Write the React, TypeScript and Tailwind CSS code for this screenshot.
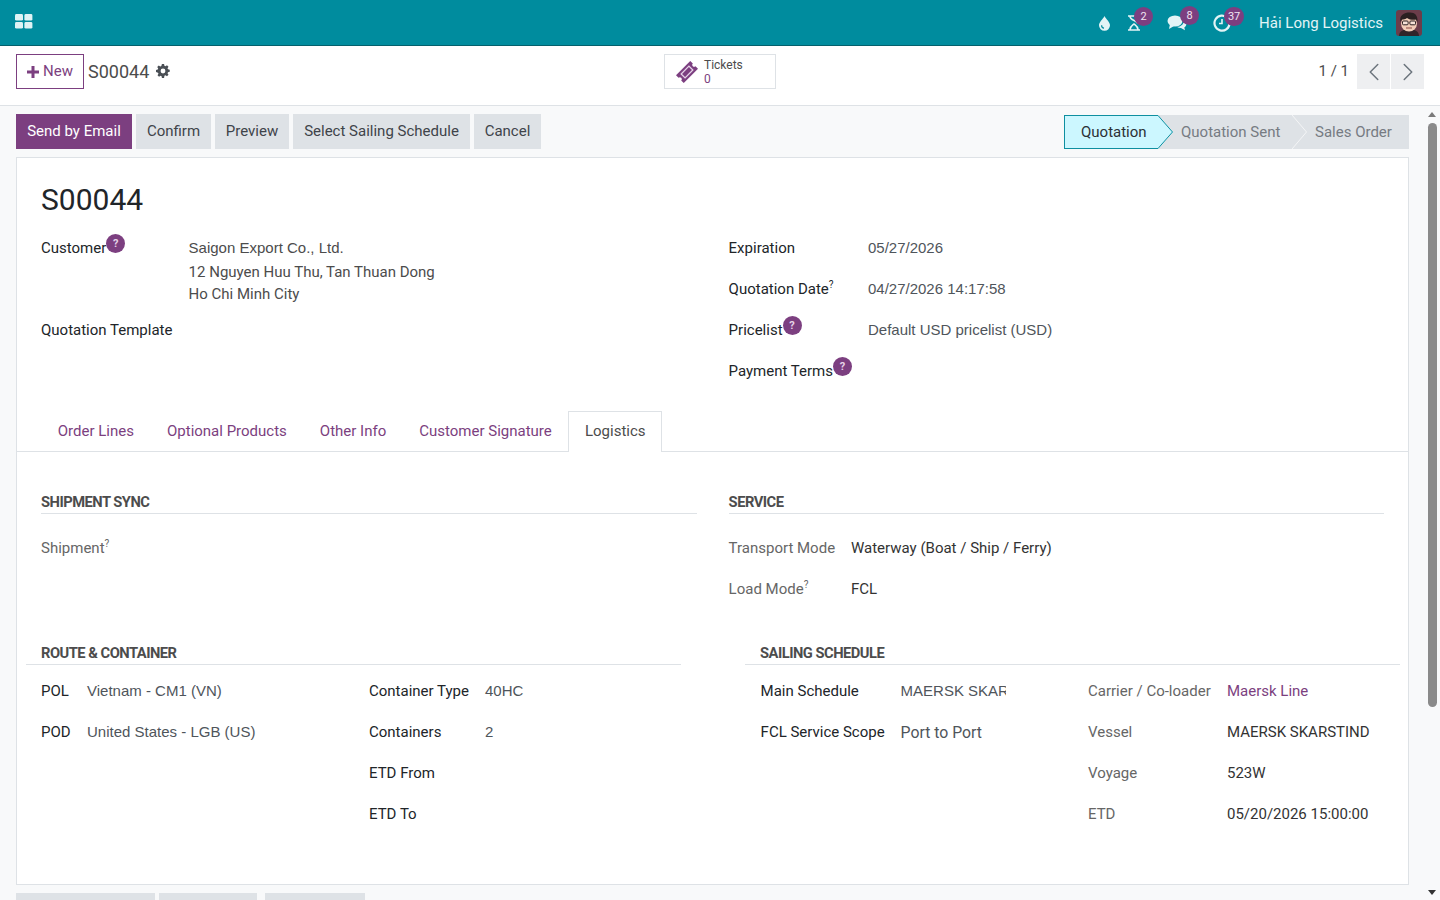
import { ChevronLeft, ChevronRight } from "lucide-react";

const PURPLE = "#7c3f80";
const ARIAL = "font-['Liberation_Sans',sans-serif]";

const Badge = ({ n, cls }: { n: string; cls: string }) => (
  <span className={`absolute flex h-[19px] items-center justify-center rounded-full bg-[#7c3f80] text-[11px] leading-none text-[#f1e6f2] ${cls}`}>
    {n}
  </span>
);

const Help = () => (
  <span className="relative -top-[6px] inline-flex h-[19px] w-[19px] items-center justify-center rounded-full bg-[#7c3f80] text-[11px] font-bold leading-none text-[#e6d3e8]">
    ?
  </span>
);

const Sup = () => <sup className="-top-[6px] text-[10px]">?</sup>;

const TopBar = () => (
  <header className="flex h-[46px] shrink-0 items-center justify-between border-b border-[#04606c] bg-[#008c9e] pl-[15px] pr-[18px]">
    <svg width="18" height="15" viewBox="0 0 18 15" className="mt-[-3px]" fill="#dff3f5">
      <rect x="0" y="0" width="8" height="6.6" rx="1.4" />
      <rect x="9.4" y="0" width="8" height="6.6" rx="1.4" />
      <rect x="0" y="8" width="8" height="6.6" rx="1.4" />
      <rect x="9.4" y="8" width="8" height="6.6" rx="1.4" />
    </svg>
    <div className="flex items-center text-[#e3f4f6]">
      <svg width="13" height="16" viewBox="0 0 13 16" className="mr-[16px]" fill="#e3f4f6">
        <path d="M6.5 1C8 4 12 7 12 10.3A5.5 5.5 0 0 1 1 10.3C1 7 5 4 6.5 1Z" />
        <path d="M3.6 10.2c0 1.6 1 2.8 2.4 3" stroke="#008c9e" strokeWidth="1.2" fill="none" />
      </svg>
      <span className="relative mr-[26px] flex">
        <svg width="14" height="16" viewBox="0 0 14 16" fill="none" stroke="#e3f4f6" strokeWidth="1.6">
          <path d="M1 1h12M1 15h12M3 1.500c0 4 8 4 8 7.500M3 14.500c0-3 3-4.500 4-5.500 1 1 4 2.500 4 5.500" />
        </svg>
        <Badge n="2" cls="-top-[8px] left-[7px] w-[19px]" />
      </span>
      <span className="relative mr-[26px] flex">
        <svg width="20" height="17" viewBox="0 0 20 17" fill="#e3f4f6">
          <ellipse cx="8" cy="7" rx="7.500" ry="5.500" />
          <path d="M3 10 2 15l5-3Z" />
          <path d="M16.800 6.500c1.800 1 2.700 2.500 2.500 4-.2 1.300-1 2.300-2 3l.7 2.800-4-2.300c-1.500 0-2.800-.3-3.800-1 3.500-.2 6.800-2.700 6.600-6.500Z" />
        </svg>
        <Badge n="8" cls="-top-[8px] left-[13px] w-[19px]" />
      </span>
      <span className="relative mr-[28px] flex">
        <svg width="18" height="18" viewBox="0 0 18 18" fill="none" stroke="#e3f4f6" strokeWidth="2.200">
          <path d="M14.500 4A7.500 7.500 0 1 0 16.500 9" />
          <path d="M9 5v4.500H6" strokeWidth="1.600" />
        </svg>
        <Badge n="37" cls="-top-[7px] left-[11px] w-[20px]" />
      </span>
      <span className="mr-[13px] mt-[1px] text-[15px] text-[#e3f4f6]">Hải Long Logistics</span>
      <svg width="26" height="26" viewBox="0 0 26 26" className="rounded-[3px]">
        <rect width="26" height="26" fill="#6b3d4a" />
        <path d="M3 26c0-5 5-7 10-7s10 2 10 7Z" fill="#30252a" />
        <ellipse cx="13" cy="13.500" rx="8" ry="8" fill="#f1cdb8" />
        <path d="M4.500 12C3 5 8 2.500 14 2.500c5 0 8 3 7.500 9.500L20 9.500c-1 .5-7 .5-9-1.500-1 1-4 1.500-5 1.500Z" fill="#2b2021" />
        <rect x="6.500" y="11" width="5.600" height="3.800" rx="1" fill="#f6e3d8" stroke="#2b2021" />
        <rect x="13.900" y="11" width="5.600" height="3.800" rx="1" fill="#f6e3d8" stroke="#2b2021" />
        <path d="M10 18h6" stroke="#8b4a44" strokeWidth="1.200" />
      </svg>
    </div>
  </header>
);

const ControlPanel = () => (
  <div className="flex h-[60px] shrink-0 items-start border-b border-[#dee2e6] bg-white pl-[16px] pr-[16px] pt-[8px]">
    <div className="flex w-[648px] items-center">
      <button className="flex h-[35px] w-[68px] items-center justify-center gap-[4px] border border-[#7c3f80] bg-white text-[15px] text-[#7c3f80]">
        <svg width="12" height="12" viewBox="0 0 12 12" fill={PURPLE}>
          <path d="M4.500 0h3v4.500H12v3H7.500V12h-3V7.500H0v-3h4.500Z" />
        </svg>
        New
      </button>
      <span className="ml-[4px] -mt-[1px] text-[18px] text-[#4c4c4c]">S00044</span>
      <svg width="14" height="14" viewBox="0 0 26 26" className="ml-[7px] -mt-[1px]" fill="#4a4f55">
        <path fillRule="evenodd" d="M11 0h4l.6 3.200 2 .9 2.800-1.800 2.800 2.800-1.800 2.800.9 2 3.200.6v4l-3.200.6-.9 2 1.800 2.800-2.800 2.800-2.800-1.800-2 .9L15 26h-4l-.6-3.200-2-.9-2.800 1.800-2.800-2.800 1.800-2.800-.9-2L0 15v-4l3.200-.6.9-2L2.300 5.600 5.100 2.800l2.800 1.800 2-.9ZM13 8.500a4.500 4.500 0 1 0 0 9 4.500 4.500 0 0 0 0-9Z" />
      </svg>
    </div>
    <div className="flex flex-1 items-center justify-between">
      <div className="flex h-[35px] w-[112px] items-center border border-[#dee2e6] pl-[11px]">
        <svg width="22" height="22" viewBox="0 0 24 24">
          <g transform="rotate(-45 12 12)">
            <path d="M1 6h22v4a2 2 0 0 0 0 4v4H1v-4a2 2 0 0 0 0-4Z" fill={PURPLE} />
            <rect x="6" y="9" width="12" height="6" fill="none" stroke="#e6d3e8" strokeWidth="1.400" />
          </g>
        </svg>
        <div className="ml-[6px] flex flex-col text-[12px] leading-[14px]">
          <span className="text-[#4c4c4c]">Tickets</span>
          <span className="text-[#7c3f80]">0</span>
        </div>
      </div>
      <div className="flex items-center">
        <span className="mr-[8px] text-[15px] text-[#4c4c4c]">1 / 1</span>
        <button className="flex h-[35px] w-[33px] items-center justify-center bg-[#eeeff1] text-[#6c757d]">
          <ChevronLeft size={30} strokeWidth={1.2} />
        </button>
        <button className="ml-px flex h-[35px] w-[33px] items-center justify-center bg-[#eeeff1] text-[#6c757d]">
          <ChevronRight size={30} strokeWidth={1.2} />
        </button>
      </div>
    </div>
  </div>
);

const actions = [
  { label: "Confirm", w: "w-[75px]" },
  { label: "Preview", w: "w-[74px]" },
  { label: "Select Sailing Schedule", w: "w-[177px]" },
  { label: "Cancel", w: "w-[67px]" },
];

const StatusRow = () => (
  <div className="flex h-[35px] items-start justify-between">
    <div className="flex gap-[4px]">
      <button className="h-[35px] w-[116px] bg-[#7c3f80] text-[15px] text-white">Send by Email</button>
      {actions.map((a) => (
        <button key={a.label} className={`h-[35px] bg-[#dee2e6] text-[15px] text-[#3f444a] ${a.w}`}>
          {a.label}
        </button>
      ))}
    </div>
    <div className="mt-[1px] flex h-[34px] text-[15px]">
      <div className="flex w-[94px] items-center border-y border-l border-[#0e8fa0] bg-[#ccf7ff] pl-[16px] text-[#2b3036]">
        Quotation
      </div>
      <svg width="15" height="34" viewBox="0 0 15 34" className="shrink-0">
        <rect width="15" height="34" fill="#dee2e6" />
        <path d="M0 0 15 17 0 34Z" fill="#ccf7ff" />
        <path d="M0 .5 14.500 17 0 33.500" fill="none" stroke="#0e8fa0" />
      </svg>
      <div className="flex w-[119px] items-center bg-[#dee2e6] pl-[8px] text-[#767b82]">Quotation Sent</div>
      <svg width="15" height="34" viewBox="0 0 15 34" className="shrink-0">
        <rect width="15" height="34" fill="#dee2e6" />
        <path d="M0 0 14.500 17 0 34" fill="none" stroke="#f4f5f6" />
      </svg>
      <div className="flex w-[102px] items-center bg-[#dee2e6] pl-[8px] text-[#767b82]">Sales Order</div>
    </div>
  </div>
);

const Field = ({ label, help, sup, value }: { label: string; help?: boolean; sup?: boolean; value?: string }) => (
  <div className="flex h-[41px] items-center text-[15px]">
    <div className="w-[139.4px] shrink-0 text-[#212529]">
      {label}
      {help && <Help />}
      {sup && <Sup />}
    </div>
    <div className={`${ARIAL} text-[#4f555b]`}>{value}</div>
  </div>
);

const tabs = ["Order Lines", "Optional Products", "Other Info", "Customer Signature"];

const Tabs = () => (
  <div className="mt-[19px] flex h-[41px] border-b border-[#dee2e6] pl-[24.3px]">
    {tabs.map((t) => (
      <div key={t} className="flex h-[40px] items-center px-[16.500px] text-[15px] text-[#7c3f80]">
        {t}
      </div>
    ))}
    <div className="flex h-[41px] w-[94px] items-center justify-center border-x border-t border-[#dee2e6] bg-white pb-[1px] text-[15px] text-[#4c4c4c]">
      Logistics
    </div>
  </div>
);

const SectionTitle = ({ children, cls }: { children: string; cls: string }) => (
  <div className={`border-b border-[#dee2e6] pb-[1px] text-[14.7px] font-bold leading-[20px] tracking-[-0.5px] text-[#4c4c4c] ${cls}`}>
    {children}
  </div>
);

const Muted = ({ label, sup, value, w, link }: { label: string; sup?: boolean; value?: string; w: string; link?: boolean }) => (
  <div className="flex h-[41px] items-center text-[15px]">
    <div className={`${w} shrink-0 text-[#666]`}>
      {label}
      {sup && <Sup />}
    </div>
    <div className={link ? "text-[#7c3f80]" : "text-[#333]"}>{value}</div>
  </div>
);

const Pair = ({ label, value, w }: { label: string; value?: string; w: string }) => (
  <div className="flex h-[41px] items-center text-[15px]">
    <div className={`${w} shrink-0 text-[#212529]`}>{label}</div>
    <div className={`${ARIAL} text-[#4f555b]`}>{value}</div>
  </div>
);

const Sheet = () => (
  <div className="mt-[8px] h-[728px] shrink-0 border border-[#dee2e6] bg-white">
    <h1 className="pl-[24px] pt-[22px] text-[30px] font-normal leading-[40px] text-[#212529]">S00044</h1>

    <div className="mt-[8px] flex pl-[24px]">
      <div className="w-[687.6px]">
        <div className="flex text-[15px] text-[#4c4c4c]">
          <div className="w-[147.6px] shrink-0 pt-[9px] leading-[22px] text-[#212529]">
            Customer
            <Help />
          </div>
          <div className="pt-[9px] leading-[22px]">
            <div className={ARIAL}>Saigon Export Co., Ltd.</div>
            <div className="mt-[2px]">12 Nguyen Huu Thu, Tan Thuan Dong</div>
            <div>Ho Chi Minh City</div>
          </div>
        </div>
        <div className="mt-[5px] flex h-[41px] items-center text-[15px] text-[#212529]">Quotation Template</div>
      </div>
      <div>
        <Field label="Expiration" value="05/27/2026" />
        <Field label="Quotation Date" sup value="04/27/2026 14:17:58" />
        <Field label="Pricelist" help value="Default USD pricelist (USD)" />
        <Field label="Payment Terms" help />
      </div>
    </div>

    <Tabs />

    <div className="flex pl-[24px] pr-[24px] pt-[40px]">
      <div className="w-[656px]">
        <SectionTitle cls="">SHIPMENT SYNC</SectionTitle>
        <div className="mt-[14px]">
          <Muted w="w-[122px]" label="Shipment" sup />
        </div>
      </div>
      <div className="ml-[31.6px] flex-1">
        <SectionTitle cls="">SERVICE</SectionTitle>
        <div className="mt-[14px]">
          <Muted w="w-[122.4px]" label="Transport Mode" value="Waterway (Boat / Ship / Ferry)" />
          <Muted w="w-[122.4px]" label="Load Mode" sup value="FCL" />
        </div>
      </div>
    </div>

    <div className="mt-[33px] flex pl-[9px]">
      <div className="w-[655px]">
        <SectionTitle cls="pl-[15px]">{"ROUTE & CONTAINER"}</SectionTitle>
        <div className="mt-[6px] flex pl-[15px]">
          <div className="w-[328px]">
            <Pair w="w-[46px]" label="POL" value="Vietnam - CM1 (VN)" />
            <Pair w="w-[46px]" label="POD" value="United States - LGB (US)" />
          </div>
          <div>
            <Pair w="w-[116px]" label="Container Type" value="40HC" />
            <Pair w="w-[116px]" label="Containers" value="2" />
            <Pair w="w-[116px]" label="ETD From" />
            <Pair w="w-[116px]" label="ETD To" />
          </div>
        </div>
      </div>
      <div className="ml-[64px] w-[655px]">
        <SectionTitle cls="pl-[15px]">SAILING SCHEDULE</SectionTitle>
        <div className="mt-[6px] flex pl-[15.6px]">
          <div className="w-[327.4px]">
            <div className="flex h-[41px] items-center text-[15px]">
              <div className="w-[140px] shrink-0 text-[#212529]">Main Schedule</div>
              <div className={`${ARIAL} w-[105px] overflow-hidden whitespace-nowrap text-[#4f555b]`}>MAERSK SKARSTIND</div>
            </div>
            <div className="flex h-[41px] items-center text-[15px]">
              <div className="w-[140px] shrink-0 text-[#212529]">FCL Service Scope</div>
              <div className="text-[15.8px] text-[#4f555b]">Port to Port</div>
            </div>
          </div>
          <div>
            <Muted w="w-[139px]" label="Carrier / Co-loader" value="Maersk Line" link />
            <Muted w="w-[139px]" label="Vessel" value="MAERSK SKARSTIND" />
            <Muted w="w-[139px]" label="Voyage" value="523W" />
            <Muted w="w-[139px]" label="ETD" value="05/20/2026 15:00:00" />
          </div>
        </div>
      </div>
    </div>
  </div>
);

const Scrollbar = () => (
  <div className="flex w-[16px] shrink-0 flex-col items-center bg-[#f8f9fa] pt-[6px]">
    <div className="h-0 w-0 border-x-[4px] border-b-[5px] border-x-transparent border-b-[#7a7a7a]" />
    <div className="mt-[6px] h-[584px] w-[9px] rounded-full bg-[#8a8a8a]" />
    <div className="mb-[5px] mt-auto h-0 w-0 border-x-[4px] border-t-[5px] border-x-transparent border-t-[#333]" />
  </div>
);

export default function App() {
  return (
    <div className="flex h-[900px] flex-col overflow-hidden bg-[#f8f9fa] font-['Roboto',sans-serif]">
      <TopBar />
      <ControlPanel />
      <div className="flex min-h-0 flex-1">
        <main className="min-w-0 flex-1 pl-[16px] pr-[15px] pt-[8px]">
          <StatusRow />
          <Sheet />
          <div className="mt-[8px] flex gap-[4px]">
            <div className="h-[20px] w-[139px] bg-[#dee2e6]" />
            <div className="h-[20px] w-[98px] bg-[#dee2e6]" />
            <div className="ml-[4px] h-[20px] w-[100px] bg-[#dee2e6]" />
          </div>
        </main>
        <Scrollbar />
      </div>
    </div>
  );
}
